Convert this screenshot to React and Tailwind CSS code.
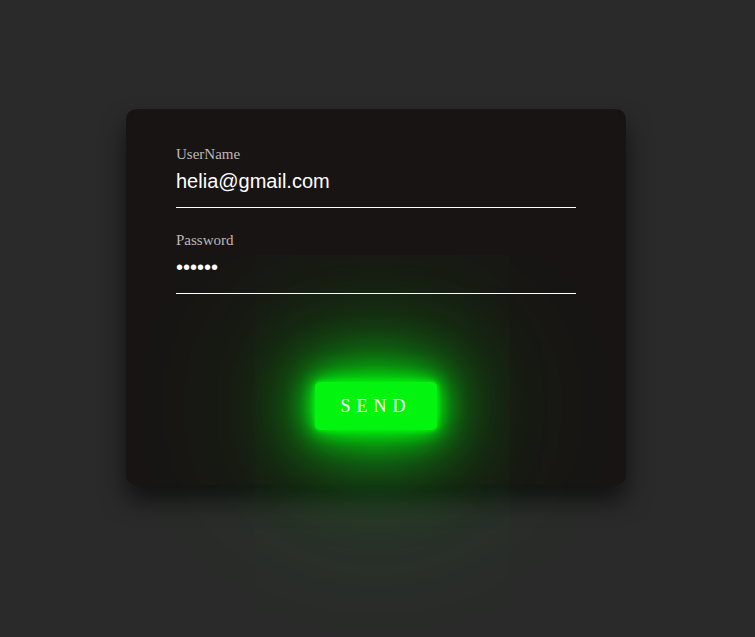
import React, { useState } from 'react';

const Field = ({ label, type, value, onChange, className = '' }) => (
  <div className={className}>
    <label className="block text-[15px] leading-[18px] text-[#bdb8b8] font-['Liberation_Serif',serif]">
      {label}
    </label>
    <input
      type={type}
      value={value}
      onChange={onChange}
      className="mt-[6px] block w-full bg-transparent border-0 border-b border-white pt-0 pb-[14px] text-[20px] leading-[24px] text-white outline-none font-['Liberation_Sans',Arial,sans-serif]"
    />
  </div>
);

const App = () => {
  const [user, setUser] = useState('helia@gmail.com');
  const [pass, setPass] = useState('123456');

  return (
    <div className="min-h-screen w-full bg-[#2a2a2a] flex justify-center pt-[109px] pr-[3px]">
      <form
        onSubmit={e => e.preventDefault()}
        className="w-[500px] h-[376px] rounded-[10px] bg-[#181414] shadow-[0_15px_25px_rgba(0,0,0,0.6)] px-[50px] pt-[36px] flex flex-col"
      >
        {/* Inputs */}
        <Field label="UserName" type="text" value={user} onChange={e => setUser(e.target.value)} />
        <Field
          label="Password"
          type="password"
          value={pass}
          onChange={e => setPass(e.target.value)}
          className="mt-[23px]"
        />

        {/* Send button */}
        <div className="flex justify-center mt-[88px]">
          <button
            type="submit"
            className="w-[122px] h-[48px] rounded-[5px] bg-[#03f40f] text-white text-[18px] tracking-[6px] font-['Liberation_Serif',serif] shadow-[0_0_5px_#03f40f,0_0_15px_#03f40f,0_0_30px_#03f40f,0_0_60px_#03f40f,0_0_100px_#03f40f,0_0_200px_#03f40f]"
          >
            SEND
          </button>
        </div>
      </form>
    </div>
  );
};

export default App;
